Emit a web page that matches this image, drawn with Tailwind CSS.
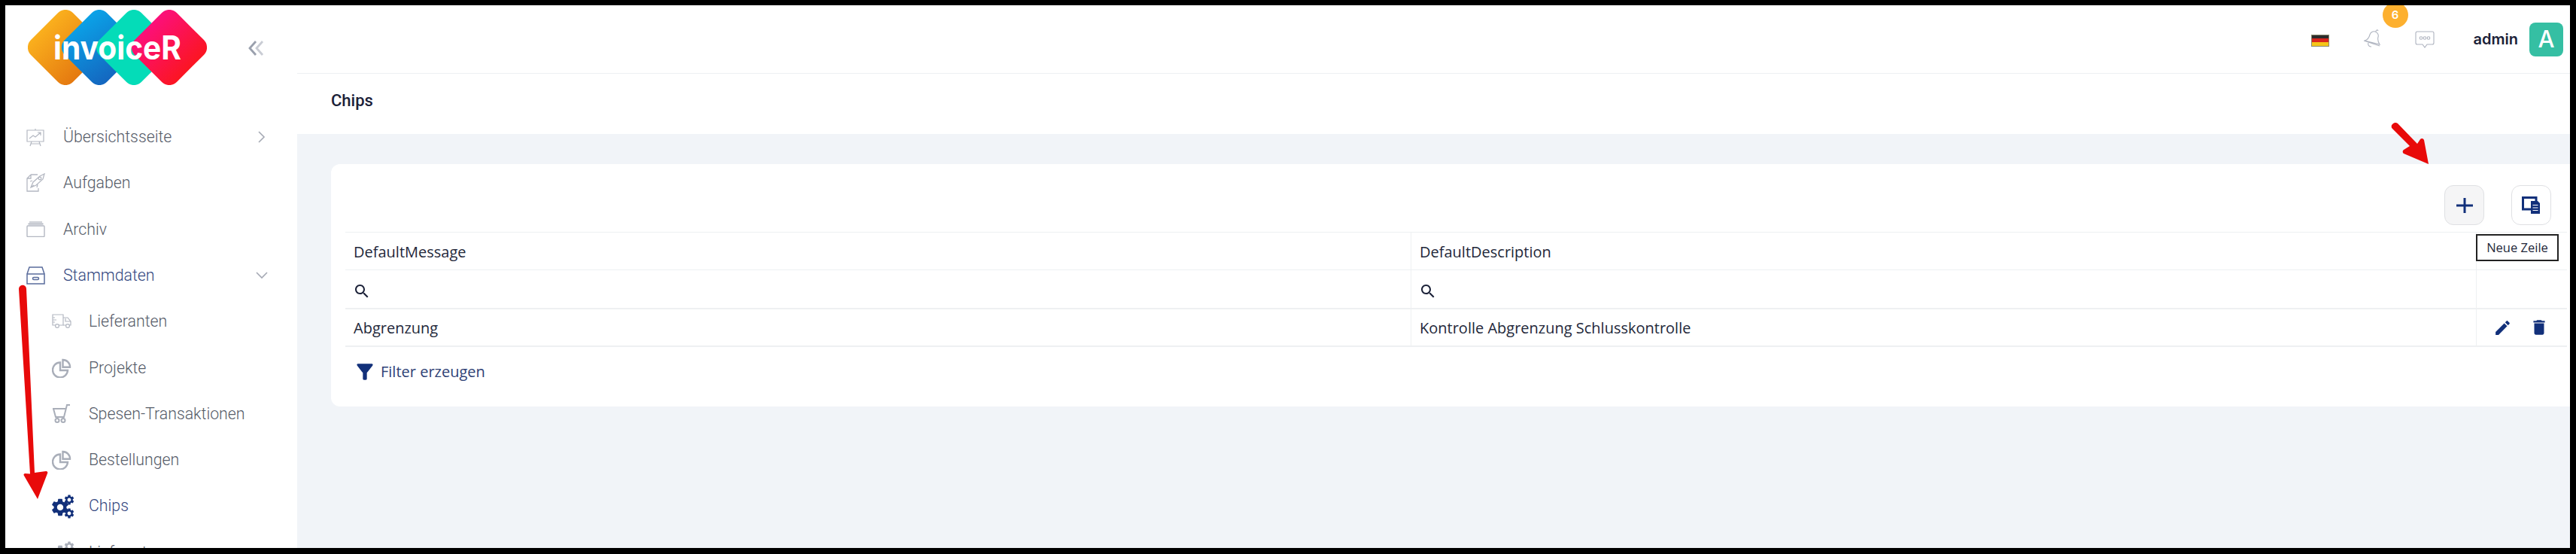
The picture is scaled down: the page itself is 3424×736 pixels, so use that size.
<!DOCTYPE html>
<html lang="de">
<head>
<meta charset="utf-8">
<title>Chips</title>
<script src="https://cdn.jsdelivr.net/npm/@tailwindcss/browser@4"></script>
</head>
<body class="bg-black w-[3424px] h-[736px] overflow-hidden relative pt-[7px] pl-[7px] pr-[8px] pb-[8px]">
<svg class="hidden" width="0" height="0">
  <defs>
    <symbol id="gear" viewBox="0 0 24 24"><path d="M19.14 12.94c.04-.3.06-.61.06-.94 0-.32-.02-.64-.07-.94l2.03-1.58c.18-.14.23-.41.12-.61l-1.92-3.32c-.12-.22-.37-.29-.59-.22l-2.39.96c-.5-.38-1.03-.7-1.62-.94l-.36-2.54c-.04-.24-.24-.41-.48-.41h-3.84c-.24 0-.43.17-.47.41l-.36 2.54c-.59.24-1.13.57-1.62.94l-2.39-.96c-.22-.08-.47 0-.59.22L2.74 8.87c-.12.21-.08.47.12.61l2.03 1.58c-.05.3-.09.63-.09.94s.02.64.07.94l-2.03 1.58c-.18.14-.23.41-.12.61l1.92 3.32c.12.22.37.29.59.22l2.39-.96c.5.38 1.03.7 1.62.94l.36 2.54c.05.24.24.41.48.41h3.84c.24 0 .44-.17.47-.41l.36-2.54c.59-.24 1.13-.56 1.62-.94l2.39.96c.22.08.47 0 .59-.22l1.92-3.32c.12-.22.07-.47-.12-.61l-2.01-1.58zM12 15.6c-1.98 0-3.6-1.62-3.6-3.6s1.62-3.6 3.6-3.6 3.6 1.62 3.6 3.6-1.62 3.6-3.6 3.6z"/></symbol>
    <symbol id="search" viewBox="0 0 24 24"><path d="M15.5 14h-.79l-.28-.27C15.41 12.59 16 11.11 16 9.5 16 5.91 13.09 3 9.5 3S3 5.91 3 9.5 5.91 16 9.5 16c1.61 0 3.09-.59 4.23-1.57l.27.28v.79l5 4.99L20.49 19l-4.99-5zm-6 0C7.01 14 5 11.99 5 9.5S7.01 5 9.5 5 14 7.01 14 9.5 11.99 14 9.5 14z"/></symbol>
    <symbol id="pie" viewBox="0 0 26 26" fill="none" stroke="#a9aeb9" stroke-width="2.4"><path d="M11 5.5a10 10 0 1 0 10 10.5h-10z"/><path d="M14.5 2a9.5 9.5 0 0 1 9.5 9.8h-9.5z"/></symbol>
  </defs>
</svg>

<div class="flex w-[3409px] h-[721px] overflow-hidden bg-[#f1f4f8] relative">
  <!-- sidebar -->
  <aside class="w-[388px] shrink-0 h-full bg-white overflow-hidden font-['Roboto',sans-serif] font-light text-[21.3px] text-[#565c69]">
    <div class="h-[144.4px] pl-[30px] pt-[6px] relative">
      <svg width="238" height="100" viewBox="0 0 238 100">
        <defs>
          <linearGradient id="g1" gradientUnits="userSpaceOnUse" x1="0" y1="50" x2="100" y2="50"><stop offset="0" stop-color="#fdb71f"/><stop offset="1" stop-color="#e2720e"/></linearGradient>
          <linearGradient id="g2" gradientUnits="userSpaceOnUse" x1="47" y1="40" x2="147" y2="60"><stop offset="0" stop-color="#0aa6ea"/><stop offset="1" stop-color="#1560bb"/></linearGradient>
          <linearGradient id="g4" gradientUnits="userSpaceOnUse" x1="138" y1="50" x2="238" y2="50"><stop offset="0" stop-color="#fc0f86"/><stop offset="1" stop-color="#fb1616"/></linearGradient>
        </defs>
        <rect x="10.5" y="10.5" width="79" height="79" rx="14" transform="rotate(45 50 50)" fill="url(#g1)"/>
        <rect x="55.5" y="10.5" width="79" height="79" rx="14" transform="rotate(45 95 50)" fill="url(#g2)"/>
        <rect x="101.5" y="10.5" width="79" height="79" rx="14" transform="rotate(45 141 50)" fill="#04dcb8"/>
        <rect x="148.5" y="10.5" width="79" height="79" rx="14" transform="rotate(45 188 50)" fill="url(#g4)"/>
        <text x="34" y="66" font-family="Inter, sans-serif" font-weight="700" font-size="44" fill="#fff" textLength="170" lengthAdjust="spacingAndGlyphs">invoiceR</text>
      </svg>
      <svg class="absolute left-[323px] top-[46px]" width="22" height="22" viewBox="0 0 22 22" fill="none" stroke-width="2.8"><path d="M10 2 2 11l8 9" stroke="#9aa0ad"/><path d="M19 2l-8 9 8 9" stroke="#c9ccd4"/></svg>
    </div>
    <nav>
      <a class="flex items-center h-[61.3px] pl-[28px] pr-[41px]">
        <span class="w-[49px] shrink-0"><svg width="24" height="25" viewBox="0 0 24 25" fill="none" stroke="#b4b8c2" stroke-width="1.2"><path d="M1 3h22v15H1zM12 1v2M7 18l-2 6M17 18l2 6M5.500 21h13"/><path d="M4 14l5-4 3 2 7-6M15 6h4v4"/></svg></span>
        <span>Übersichtsseite</span>
        <svg class="ml-auto" width="12" height="16" viewBox="0 0 12 16" fill="none" stroke="#a5a9b4" stroke-width="1.6"><path d="M2 1l7 7-7 7"/></svg>
      </a>
      <a class="flex items-center h-[61.3px] pl-[28px]">
        <span class="w-[49px] shrink-0"><svg width="25" height="26" viewBox="0 0 25 26" fill="none" stroke="#b4b8c2" stroke-width="1.3"><path d="M6 2h9M6 2 1 7v17h15v-4M1 7h5V2"/><path d="M6 19l3-7 9-8 6-3-2 7-9 8zM8 10l-3 1M15 15l-1 4M6 19l4-3"/><circle cx="18" cy="7" r="1.8"/></svg></span>
        <span>Aufgaben</span>
      </a>
      <a class="flex items-center h-[61.3px] pl-[28px]">
        <span class="w-[49px] shrink-0"><svg width="25" height="21" viewBox="0 0 25 21" fill="none" stroke="#b4b8c2"><path d="M4 1h17" stroke-width="1.3"/><path d="M2.500 3.500h20" stroke-width="2"/><rect x="1" y="6" width="23" height="14.5" rx="1" stroke-width="1.4"/></svg></span>
        <span>Archiv</span>
      </a>
      <a class="flex items-center h-[61.3px] pl-[28px] pr-[39px] text-[#33477f]">
        <span class="w-[49px] shrink-0"><svg width="25" height="24" viewBox="0 0 25 24" fill="none" stroke="#5a6c9c" stroke-width="1.5"><path d="M1 23V10h23v13zM1 10l3-9h17l3 9"/><rect x="8.500" y="14.500" width="8" height="3" rx="1.5"/></svg></span>
        <span>Stammdaten</span>
        <svg class="ml-auto" width="16" height="10" viewBox="0 0 16 10" fill="none" stroke="#a5a9b4" stroke-width="1.6"><path d="M1 1l7 7 7-7"/></svg>
      </a>
      <a class="flex items-center h-[61.3px] pl-[62px]">
        <span class="w-[49px] shrink-0"><svg width="26" height="20" viewBox="0 0 26 20" fill="none" stroke="#b4b8c2" stroke-width="1.2"><path d="M5 15H1V1h14v14H9M1 5h3M1 8h5M1 11h3"/><path d="M15 5h6l4 5v5h-2M19 15h-4M18 6v4h7"/><circle cx="7" cy="16" r="2.4"/><circle cx="21" cy="16" r="2.4"/></svg></span>
        <span>Lieferanten</span>
      </a>
      <a class="flex items-center h-[61.3px] pl-[62px]">
        <span class="w-[49px] shrink-0"><svg width="26" height="26"><use href="#pie"/></svg></span>
        <span>Projekte</span>
      </a>
      <a class="flex items-center h-[61.3px] pl-[62px]">
        <span class="w-[49px] shrink-0"><svg width="25" height="25" viewBox="0 0 25 25" fill="none" stroke="#a9aeb9" stroke-width="2"><path d="M1 6h18M2 6l3 11h11l4-16h4"/><circle cx="7" cy="21.5" r="2.5"/><circle cx="15" cy="21.5" r="2.5"/></svg></span>
        <span>Spesen-Transaktionen</span>
      </a>
      <a class="flex items-center h-[61.3px] pl-[62px]">
        <span class="w-[49px] shrink-0"><svg width="26" height="26"><use href="#pie"/></svg></span>
        <span>Bestellungen</span>
      </a>
      <a class="flex items-center h-[61.3px] pl-[62px] text-[#33477f]">
        <span class="w-[49px] shrink-0 relative h-[24px] block fill-[#12307a]">
          <svg class="absolute left-[-3px] top-[0px]" width="28" height="28"><use href="#gear"/></svg>
          <svg class="absolute left-[15px] top-[-4px]" width="16" height="16"><use href="#gear"/></svg>
          <svg class="absolute left-[15px] top-[14px]" width="16" height="16"><use href="#gear"/></svg>
        </span>
        <span>Chips</span>
      </a>
      <a class="flex items-center h-[61.3px] pl-[62px]">
        <span class="w-[49px] shrink-0 relative h-[24px] block fill-[#a9aeb9]">
          <svg class="absolute left-[-3px] top-[0px]" width="28" height="28"><use href="#gear"/></svg>
          <svg class="absolute left-[15px] top-[-4px]" width="16" height="16"><use href="#gear"/></svg>
        </span>
        <span>Lieferart</span>
      </a>
    </nav>
  </aside>

  <!-- main -->
  <main class="flex-1 min-w-0 flex flex-col">
    <header class="h-[91px] shrink-0 bg-white border-b border-[#eef0f3] flex items-center justify-end pr-[9px] relative">
      <div class="w-[24px] h-[16px] mt-[3px] flex flex-col border border-[#8a8a70]">
        <span class="flex-1 bg-[#2b2b2b]"></span><span class="flex-1 bg-[#d9251d]"></span><span class="flex-1 bg-[#f5c518]"></span>
      </div>
      <div class="ml-[45px] relative">
        <svg class="block" width="24" height="26" viewBox="0 0 24 26" fill="none" stroke="#aeb3bf" stroke-width="1.1"><path d="M2 15c4-1 6-4 7-8 1-3 4-5 7-4s5 4 4 7c-1 4 0 7 2 10zM1 15l21 7M17 3c0-2 2-3 3-1M7 18c-1 3 1 5 4 5"/></svg>
        <span class="absolute left-[26px] top-[-36px] w-[34px] h-[34px] rounded-full bg-[#fdb02f] text-white text-[15px] font-semibold font-['Inter',sans-serif] flex items-center justify-center">6</span>
      </div>
      <svg class="ml-[45px] block mt-[1px]" width="26" height="23" viewBox="0 0 26 23" fill="none" stroke="#aeb3bf" stroke-width="1.1"><path d="M3 1h20a2 2 0 0 1 2 2v13a2 2 0 0 1-2 2h-7l-3 4-3-4H3a2 2 0 0 1-2-2V3a2 2 0 0 1 2-2z"/><circle cx="8" cy="9.500" r="1.8"/><circle cx="13" cy="9.500" r="1.8"/><circle cx="18" cy="9.500" r="1.8"/></svg>
      <span class="ml-[52px] font-['Inter',sans-serif] font-semibold text-[20px] text-[#1b2138]">admin</span>
      <span class="ml-[15px] w-[45px] h-[45px] rounded-lg bg-[#35bfa3] text-white text-[31px] font-['Inter',sans-serif] font-medium flex items-center justify-center">A</span>
    </header>
    <div class="h-[80px] shrink-0 bg-white flex items-center pl-[45px] pb-[9px] font-['Roboto',sans-serif] font-medium text-[22px] text-[#1b2138]">Chips</div>

    <section class="pt-[40px] pl-[45px]">
      <div class="bg-white rounded-l-xl h-[322px] pl-[19px] pr-[4px] font-['Open_Sans',sans-serif] text-[20px] text-[#23283a]">
        <div class="h-[90px] flex justify-end items-start pt-[28px] pr-[21px] gap-[36px]">
          <button class="w-[53px] h-[53px] rounded-xl border border-[#dfe0e3] bg-[#f5f5f6] flex items-center justify-center">
            <svg width="24" height="24" viewBox="0 0 24 24" fill="none" stroke="#12307a" stroke-width="3"><path d="M12 2v20M1 12h22"/></svg>
          </button>
          <button class="w-[53px] h-[53px] rounded-xl border border-[#dfe0e3] bg-white flex items-center justify-center">
            <svg width="25" height="23" viewBox="0 0 25 23" fill="none"><path d="M13 17H1.500V1.500H19V6" stroke="#12307a" stroke-width="3"/><path d="M12 6h9l3 3v14H12z" fill="#12307a"/><path d="M14.500 11.500h7M14.500 15h7M14.500 18.500h7" stroke="#fff" stroke-width="1.2"/></svg>
          </button>
        </div>
        <div class="border-t border-[#eef0f2]">
          <div class="grid grid-cols-[1416px_1416px_121px] h-[50px] border-b border-[#eef0f2]">
            <div class="flex items-center pl-[11px] pt-[3px]">DefaultMessage</div>
            <div class="flex items-center pl-[11px] pt-[3px] border-l border-[#eef0f2]">DefaultDescription</div>
            <div class="border-l border-[#eef0f2]"></div>
          </div>
          <div class="grid grid-cols-[1416px_1416px_121px] h-[52px] border-b-2 border-[#eef0f2] fill-[#1b2138]">
            <div class="flex items-center pl-[10px] pt-[6px]"><svg width="24" height="24"><use href="#search"/></svg></div>
            <div class="flex items-center pl-[10px] pt-[6px] border-l border-[#eef0f2]"><svg width="24" height="24"><use href="#search"/></svg></div>
            <div class="border-l border-[#eef0f2]"></div>
          </div>
          <div class="grid grid-cols-[1416px_1416px_121px] h-[50px] border-b-2 border-[#eef0f2]">
            <div class="flex items-center pl-[11px] pt-[2px]">Abgrenzung</div>
            <div class="flex items-center pl-[11px] pt-[2px] border-l border-[#eef0f2]">Kontrolle Abgrenzung Schlusskontrolle</div>
            <div class="flex items-center pl-[22px] gap-[23px] border-l border-[#eef0f2] fill-[#12307a]">
              <svg width="25" height="25" viewBox="0 0 24 24"><path d="M3 17.250V21h3.750L17.810 9.940l-3.750-3.750L3 17.250zM20.710 7.040c.39-.39.39-1.020 0-1.410l-2.340-2.340c-.39-.39-1.020-.39-1.410 0l-1.830 1.830 3.750 3.750 1.830-1.830z"/></svg>
              <svg width="26" height="26" viewBox="0 0 24 24"><path d="M6 19c0 1.100.9 2 2 2h8c1.100 0 2-.9 2-2V7H6v12zM19 4h-3.500l-1-1h-5l-1 1H5v2h14V4z"/></svg>
            </div>
          </div>
          <div class="flex items-center h-[66px] pl-[10px] pb-[1px] text-[#2f4276]">
            <svg class="fill-[#12307a]" width="32" height="32" viewBox="0 0 24 24"><path d="M4.250 5.610C6.270 8.200 10 13 10 13v6c0 .55.45 1 1 1h2c.55 0 1-.45 1-1v-6s3.720-4.800 5.740-7.390c.51-.66.04-1.610-.79-1.610H5.040c-.83 0-1.300.95-.79 1.610z"/></svg>
            <span class="ml-[5px]">Filter erzeugen</span>
          </div>
        </div>
      </div>
    </section>
  </main>

  <!-- tooltip -->
  <div class="absolute left-[3284px] top-[304px] w-[110px] h-[36px] bg-white border-2 border-[#222] flex items-center justify-center font-['Open_Sans',sans-serif] text-[16.5px] text-[#23283a]">Neue Zeile</div>
</div>

<!-- annotation arrows -->
<svg class="absolute left-0 top-0 pointer-events-none" width="3424" height="736" viewBox="0 0 3424 736" fill="#e80a0a">
  <path d="M25 384a5 5 0 0 1 10 -.5L46 628l15-2a2 2 0 0 1 2 3L50 663 32 632a2 2 0 0 1 1-3l7 .5L25 384z"/>
  <path d="M3180 165a5 5 0 0 1 7-1l26 27 4-6a3 3 0 0 1 5 1l6 32-33-14a3 3 0 0 1 0-5l8-5-23-23a4 4 0 0 1 0-6z"/>
</svg>
</body>
</html>
